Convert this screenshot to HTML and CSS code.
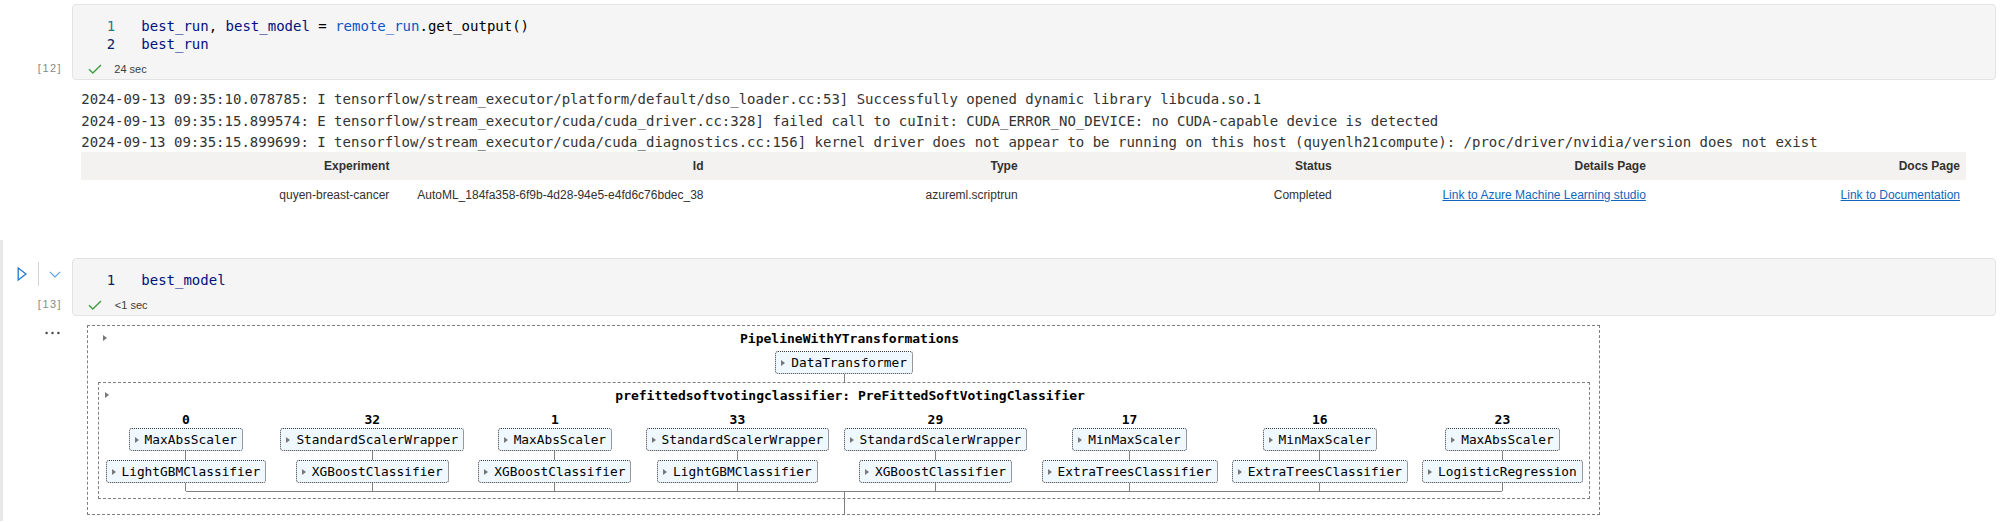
FILE: index.html
```html
<!DOCTYPE html>
<html lang="en">
<head>
<meta charset="utf-8">
<title>Notebook</title>
<link rel="stylesheet" href="styles.css">
</head>
<body>
<div class="nb">

  <section class="cell cell-first">
    <div class="cell-row">
      <div class="gutter">
        <span class="exec-count">[12]</span>
      </div>
      <div class="editor">
        <div class="code">
          <div class="line"><span class="ln">1</span><span class="src"><span class="v">best_run</span>, <span class="v">best_model</span> = <span class="v2">remote_run</span>.get_output()</span></div>
          <div class="line"><span class="ln active">2</span><span class="src"><span class="v">best_run</span></span></div>
        </div>
        <div class="status">
          <svg class="check" width="14" height="10" viewBox="0 0 14 10"><path d="M1 5.2 L4.8 9 L13 1"/></svg>
          <span class="time">24 sec</span>
        </div>
      </div>
    </div>
    <div class="output">
<pre class="log">2024-09-13 09:35:10.078785: I tensorflow/stream_executor/platform/default/dso_loader.cc:53] Successfully opened dynamic library libcuda.so.1
2024-09-13 09:35:15.899574: E tensorflow/stream_executor/cuda/cuda_driver.cc:328] failed call to cuInit: CUDA_ERROR_NO_DEVICE: no CUDA-capable device is detected
2024-09-13 09:35:15.899699: I tensorflow/stream_executor/cuda/cuda_diagnostics.cc:156] kernel driver does not appear to be running on this host (quyenlh21compute): /proc/driver/nvidia/version does not exist</pre>
      <table class="runs">
        <thead>
          <tr><th>Experiment</th><th>Id</th><th>Type</th><th>Status</th><th>Details Page</th><th>Docs Page</th></tr>
        </thead>
        <tbody>
          <tr>
            <td>quyen-breast-cancer</td>
            <td>AutoML_184fa358-6f9b-4d28-94e5-e4fd6c76bdec_38</td>
            <td>azureml.scriptrun</td>
            <td>Completed</td>
            <td><a href="#">Link to Azure Machine Learning studio</a></td>
            <td><a href="#">Link to Documentation</a></td>
          </tr>
        </tbody>
      </table>
    </div>
  </section>

  <section class="cell cell-focused">
    <div class="cell-row">
      <div class="gutter">
        <div class="run-tools">
          <svg class="run" width="10" height="14" viewBox="0 0 10 14"><path d="M1.2 1 L9 7 L1.2 13 Z"/></svg>
          <span class="sep"></span>
          <svg class="chev" width="12" height="7" viewBox="0 0 12 7"><path d="M0.8 0.8 L6 6 L11.2 0.8"/></svg>
        </div>
        <span class="exec-count">[13]</span>
      </div>
      <div class="editor">
        <div class="code">
          <div class="line"><span class="ln active">1</span><span class="src"><span class="v">best_model</span></span></div>
        </div>
        <div class="status">
          <svg class="check" width="14" height="10" viewBox="0 0 14 10"><path d="M1 5.2 L4.8 9 L13 1"/></svg>
          <span class="time lt">&lt;1 sec</span>
        </div>
      </div>
    </div>

    <div class="out-row">
      <div class="out-gutter">
        <svg class="more" width="15" height="4" viewBox="0 0 15 4"><circle cx="1.6" cy="2" r="1.2"/><circle cx="7.5" cy="2" r="1.2"/><circle cx="13.4" cy="2" r="1.2"/></svg>
      </div>

      <div class="sk-box outer">
        <div class="sk-title"><span class="arrow"></span><span class="sk-name">PipelineWithYTransformations</span></div>
        <div class="serial">
          <div class="est top-est"><span class="arrow"></span>DataTransformer</div>
          <div class="vline link-in"></div>
          <div class="sk-box inner">
            <div class="sk-title"><span class="arrow"></span><span class="sk-name">prefittedsoftvotingclassifier: PreFittedSoftVotingClassifier</span></div>
            <div class="parallel">
              <div class="par-item">
                <div class="par-body">
                  <div class="par-label">0</div>
                  <div class="est"><span class="arrow"></span>MaxAbsScaler</div>
                  <div class="vline mid"></div>
                  <div class="est"><span class="arrow"></span>LightGBMClassifier</div>
                  <div class="vline grow"></div>
                </div>
                <div class="rail"></div>
              </div>
              <div class="par-item">
                <div class="par-body">
                  <div class="par-label">32</div>
                  <div class="est"><span class="arrow"></span>StandardScalerWrapper</div>
                  <div class="vline mid"></div>
                  <div class="est"><span class="arrow"></span>XGBoostClassifier</div>
                  <div class="vline grow"></div>
                </div>
                <div class="rail"></div>
              </div>
              <div class="par-item">
                <div class="par-body">
                  <div class="par-label">1</div>
                  <div class="est"><span class="arrow"></span>MaxAbsScaler</div>
                  <div class="vline mid"></div>
                  <div class="est"><span class="arrow"></span>XGBoostClassifier</div>
                  <div class="vline grow"></div>
                </div>
                <div class="rail"></div>
              </div>
              <div class="par-item">
                <div class="par-body">
                  <div class="par-label">33</div>
                  <div class="est"><span class="arrow"></span>StandardScalerWrapper</div>
                  <div class="vline mid"></div>
                  <div class="est"><span class="arrow"></span>LightGBMClassifier</div>
                  <div class="vline grow"></div>
                </div>
                <div class="rail"></div>
              </div>
              <div class="par-item">
                <div class="par-body">
                  <div class="par-label">29</div>
                  <div class="est"><span class="arrow"></span>StandardScalerWrapper</div>
                  <div class="vline mid"></div>
                  <div class="est"><span class="arrow"></span>XGBoostClassifier</div>
                  <div class="vline grow"></div>
                </div>
                <div class="rail"></div>
              </div>
              <div class="par-item">
                <div class="par-body">
                  <div class="par-label">17</div>
                  <div class="est"><span class="arrow"></span>MinMaxScaler</div>
                  <div class="vline mid"></div>
                  <div class="est"><span class="arrow"></span>ExtraTreesClassifier</div>
                  <div class="vline grow"></div>
                </div>
                <div class="rail"></div>
              </div>
              <div class="par-item">
                <div class="par-body">
                  <div class="par-label">16</div>
                  <div class="est"><span class="arrow"></span>MinMaxScaler</div>
                  <div class="vline mid"></div>
                  <div class="est"><span class="arrow"></span>ExtraTreesClassifier</div>
                  <div class="vline grow"></div>
                </div>
                <div class="rail"></div>
              </div>
              <div class="par-item">
                <div class="par-body">
                  <div class="par-label">23</div>
                  <div class="est"><span class="arrow"></span>MaxAbsScaler</div>
                  <div class="vline mid"></div>
                  <div class="est"><span class="arrow"></span>LogisticRegression</div>
                  <div class="vline grow"></div>
                </div>
                <div class="rail"></div>
              </div>
            </div>
            <div class="vline tail-inner"></div>
          </div>
          <div class="vline tail-outer"></div>
        </div>
      </div>
    </div>
  </section>

</div>
</body>
</html>
```

FILE: styles.css
```css
html, body {
  margin: 0;
  padding: 0;
  background: #ffffff;
}
body {
  width: 2009px;
  height: 522px;
  overflow: hidden;
  font-family: "Liberation Sans", Arial, sans-serif;
  color: #333333;
}

.nb {
  display: flex;
  flex-direction: column;
}

.cell {
  border-left: 3px solid transparent;
  display: flex;
  flex-direction: column;
}
.cell-first {
  padding-top: 4.3px;
}
.cell-focused {
  border-left-color: #e8e8e8;
  margin-top: 30px;
  padding-top: 18.3px;
  padding-bottom: 6px;
}

.cell-row {
  display: flex;
}

.gutter {
  width: 68.7px;
  flex: none;
  display: flex;
  flex-direction: column;
  align-items: flex-end;
  justify-content: flex-end;
  padding-bottom: 5px;
  box-sizing: border-box;
}
.cell-focused .gutter {
  justify-content: space-between;
}

.exec-count {
  font-family: "Liberation Sans", Arial, sans-serif;
  font-size: 11px;
  line-height: 14px;
  letter-spacing: 1.5px;
  color: #8a8a8a;
  margin-right: 9.5px;
}

.run-tools {
  align-self: stretch;
  display: flex;
  align-items: center;
  height: 24.3px;
  margin-top: 3.4px;
  padding-left: 14.3px;
}
.run path {
  fill: none;
  stroke: #1f78d1;
  stroke-width: 1.3;
  stroke-linejoin: miter;
}
.sep {
  width: 1px;
  height: 24.3px;
  background: #d4d4d4;
  margin-left: 10.5px;
  margin-right: 9.9px;
}
.chev {
  margin-top: 1px;
}
.chev path {
  fill: none;
  stroke: #5aa2e8;
  stroke-width: 1.1;
}

.editor {
  flex: 1;
  margin-right: 13.3px;
  background: #f5f5f5;
  border: 1px solid #e3e3e3;
  border-radius: 4px;
  padding-top: 12px;
}

.code {
  font-family: "DejaVu Sans Mono", "Liberation Mono", monospace;
  font-size: 14px;
  line-height: 18px;
  color: #000000;
}
.line {
  display: flex;
  white-space: pre;
}
.ln {
  width: 42.6px;
  text-align: right;
  color: #237893;
}
.ln.active {
  color: #0b216f;
}
.src {
  margin-left: 26px;
}
.v { color: #001080; }
.v2 { color: #0a56c2; }

.status {
  display: flex;
  align-items: center;
  height: 21px;
  margin-top: 5px;
  padding-left: 15.6px;
}
.check path {
  fill: none;
  stroke: #3e9f41;
  stroke-width: 1.4;
}
.time {
  margin-left: 12px;
  font-family: "Liberation Sans", Arial, sans-serif;
  font-size: 11px;
  color: #3c3c3c;
}
.time.lt {
  margin-left: 12.5px;
}

/* output of cell 1 */
.output {
  padding-left: 78.25px;
  padding-right: 43px;
  margin-top: 9px;
}
.log {
  margin: 0;
  font-family: "DejaVu Sans Mono", "Liberation Mono", monospace;
  font-size: 14px;
  line-height: 21.33px;
  color: #333333;
  white-space: pre;
}

.runs {
  width: 100%;
  table-layout: fixed;
  border-collapse: collapse;
  margin-top: -1.3px;
  font-family: "Liberation Sans", Arial, sans-serif;
  font-size: 12px;
  color: #323130;
}
.runs th {
  background: #f3f2f1;
  font-weight: bold;
  height: 28px;
  padding: 0 6px;
  text-align: right;
}
.runs td {
  height: 30px;
  padding: 0 6px;
  text-align: right;
  white-space: nowrap;
}
.runs a {
  color: #1166bb;
  text-decoration: underline;
}

/* output of cell 2: estimator diagram */
.out-row {
  display: flex;
  align-items: flex-start;
  margin-top: 8.7px;
}
.out-gutter {
  width: 84.3px;
  flex: none;
  display: flex;
  justify-content: flex-end;
  padding-right: 27px;
  padding-top: 6px;
  box-sizing: border-box;
}
.more circle {
  fill: #444444;
}

.sk-box {
  display: flex;
  flex-direction: column;
  border: 1px dashed #808080;
  background: #ffffff;
}
.sk-box.outer {
  padding: 0 9px 0 10px;
}

.sk-title {
  display: flex;
  align-items: center;
  padding-top: 4px;
  padding-left: 5px;
  height: 17px;
  box-sizing: content-box;
}
.inner .sk-title {
  padding-left: 6px;
}
.sk-title .arrow {
  margin-right: 2px;
}
.sk-name {
  flex: 1;
  text-align: center;
  font-family: "DejaVu Sans Mono", "Liberation Mono", monospace;
  font-weight: bold;
  font-size: 13px;
  line-height: 17px;
  color: #000000;
}

.arrow {
  display: inline-block;
  width: 0;
  height: 0;
  border-left: 4px solid #787878;
  border-top: 3px solid transparent;
  border-bottom: 3px solid transparent;
  flex: none;
}

.serial {
  display: flex;
  flex-direction: column;
  align-items: center;
}

.est {
  display: flex;
  align-items: center;
  height: 23.5px;
  box-sizing: border-box;
  padding: 0 5px;
  border: 1px dotted #3a3a3a;
  border-radius: 3px;
  background: #f0f8ff;
  font-family: "DejaVu Sans Mono", "Liberation Mono", monospace;
  font-size: 12.8px;
  color: #000000;
  white-space: nowrap;
}
.est .arrow {
  margin-right: 6px;
}
.top-est {
  margin-top: 4px;
}

.vline {
  width: 1px;
  background: #808080;
  flex: none;
}
.link-in { height: 7.5px; }
.mid { height: 8.5px; }
.grow {
  flex: 1;
  min-height: 7.5px;
}
.tail-inner {
  height: 6px;
  align-self: center;
}
.tail-outer {
  height: 15px;
}

.parallel {
  display: flex;
  margin: 0 -0.9px;
}
.par-item {
  display: flex;
  flex-direction: column;
}
.par-body {
  flex: 1;
  display: flex;
  flex-direction: column;
  align-items: center;
  padding: 0 7.1px;
}
.par-label {
  margin-top: 7px;
  font-family: "DejaVu Sans Mono", "Liberation Mono", monospace;
  font-weight: bold;
  font-size: 13px;
  line-height: 17px;
  color: #000000;
}
.rail {
  height: 1px;
  background: #808080;
}
.par-item:first-child .rail {
  margin-left: 50%;
}
.par-item:last-child .rail {
  margin-right: 50%;
}
```
